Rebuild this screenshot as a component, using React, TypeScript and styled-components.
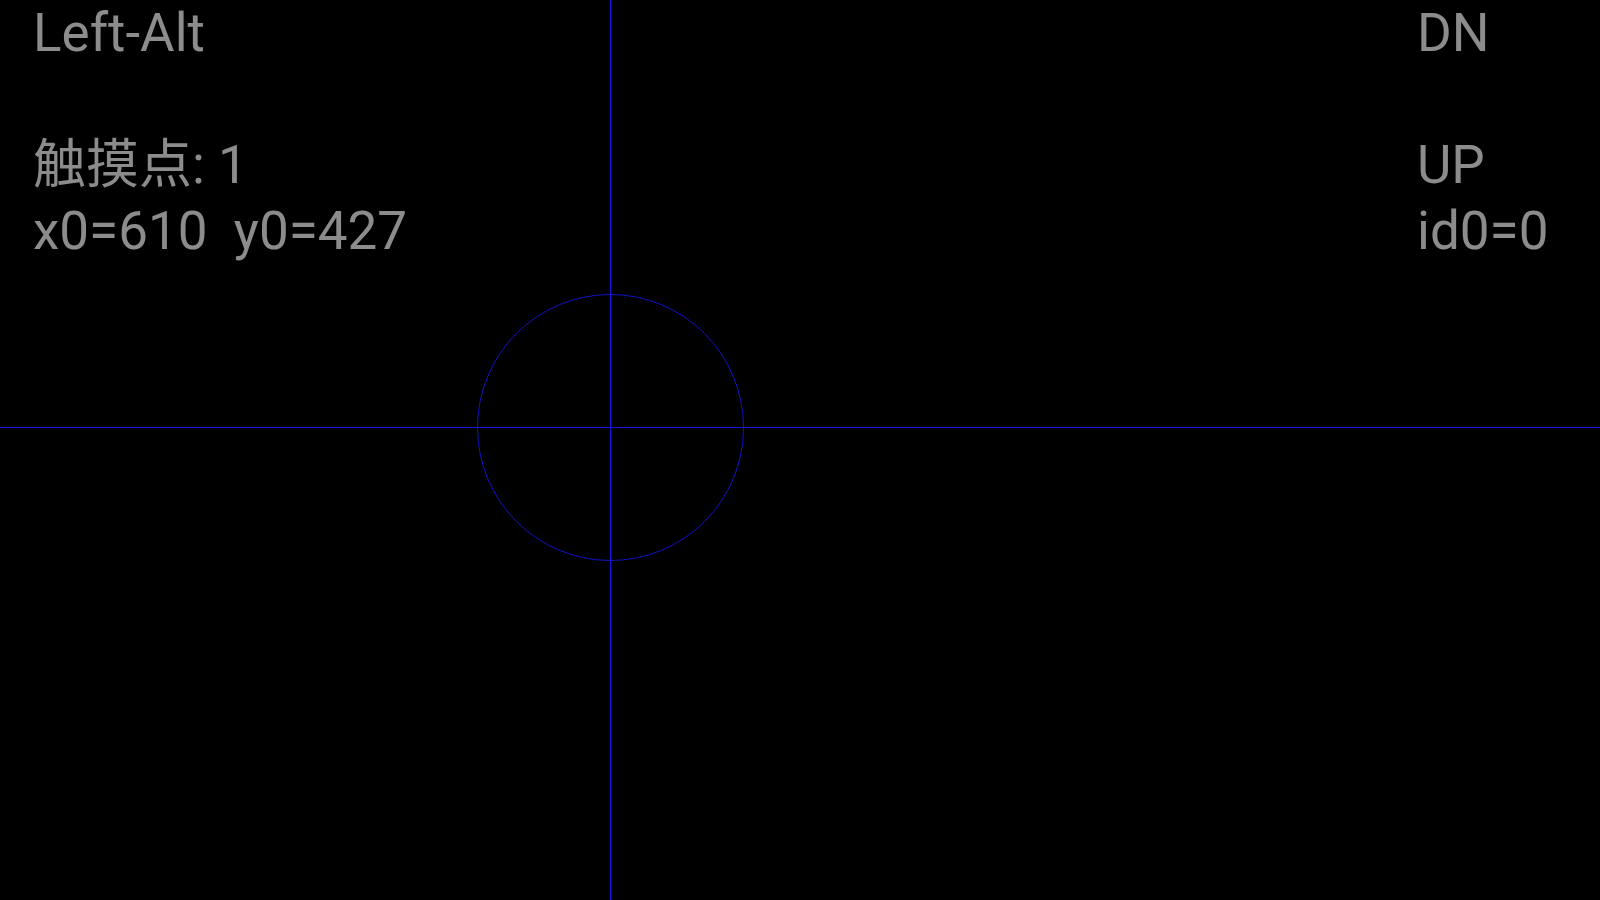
import React from "react";
import styled, { createGlobalStyle } from "styled-components";

const GlobalStyle = createGlobalStyle`
  html, body {
    margin: 0;
    padding: 0;
    background: #000;
  }
`;

const Screen = styled.div`
  position: relative;
  width: 1600px;
  height: 900px;
  background: #000;
  overflow: hidden;
`;

const Readout = styled.div`
  display: grid;
  grid-template-columns: 1fr 183px;
  padding-left: 33px;
  font-family: Roboto, "Noto Sans CJK SC", sans-serif;
  font-size: 53px;
  line-height: 66px;
  color: #8c8c8c;
`;

const Column = styled.div`
  display: flex;
  flex-direction: column;
`;

const Line = styled.div<{ $blank?: boolean }>`
  height: 66px;
  white-space: pre;
`;

const Trace = styled.svg`
  position: absolute;
  left: 0;
  top: 0;
  pointer-events: none;
`;

type Pointer = { x: number; y: number; r: number };

function App(): JSX.Element {
  const pointer: Pointer = { x: 610, y: 427, r: 133 };

  return (
    <>
      <GlobalStyle />
      <Screen>
        <Readout>
          <Column>
            <Line>Left-Alt</Line>
            <Line $blank />
            <Line>触摸点: 1</Line>
            <Line>{`x0=${pointer.x}  y0=${pointer.y}`}</Line>
          </Column>
          <Column>
            <Line>DN</Line>
            <Line $blank />
            <Line>UP</Line>
            <Line>id0=0</Line>
          </Column>
        </Readout>
        <Trace width="1600" height="900" viewBox="0 0 1600 900">
          <line x1="0" y1={pointer.y + 0.5} x2="1600" y2={pointer.y + 0.5} stroke="#1414e6" strokeWidth="1" />
          <line x1={pointer.x + 0.5} y1="0" x2={pointer.x + 0.5} y2="900" stroke="#1414e6" strokeWidth="1" />
          <circle cx={pointer.x + 0.5} cy={pointer.y + 0.5} r={pointer.r} fill="none" stroke="#1212c8" strokeWidth="1" />
        </Trace>
      </Screen>
    </>
  );
}

export default App;
